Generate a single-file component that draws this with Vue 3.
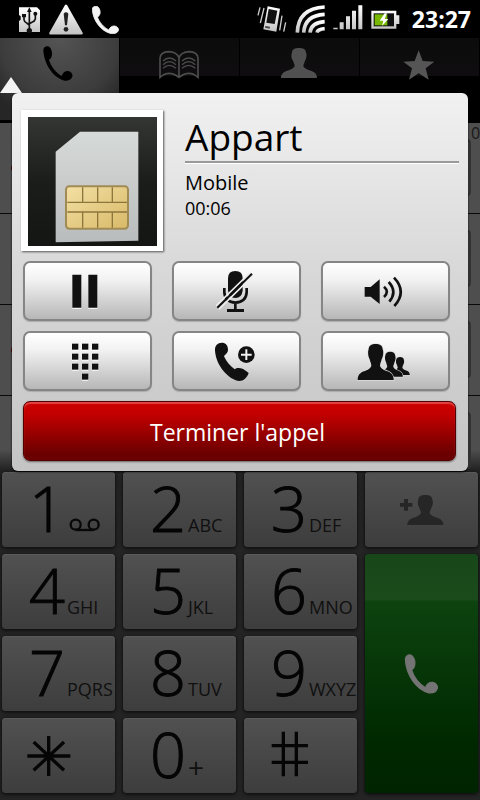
<script setup>
const handset =
  'M132 150 C132 140 140 136 147 138 C154 141 159 152 158 163 C157 172 153 176 149 178 C155 198 170 217 187 227 C190 217 198 211 207 212 C216 214 221 222 219 229 C216 238 206 242 196 241 C160 232 134 190 132 150Z'
const person =
  'M33 14 C33 4 42 0 54 0 C66 0 75 4 75 14 C78 18 77 32 72 38 C70 46 67 48 67 55 C72 64 82 66 92 69 C104 74 108 81 108 90 H0 C0 81 4 74 16 69 C26 66 36 64 41 55 C41 48 38 46 36 38 C31 32 30 18 33 14Z'
const keys = [
  { digit: '1', icon: 'voicemail' },
  { digit: '2', letters: 'ABC' },
  { digit: '3', letters: 'DEF' },
  { icon: 'add' },
  { digit: '4', letters: 'GHI' },
  { digit: '5', letters: 'JKL' },
  { digit: '6', letters: 'MNO' },
  { icon: 'call' },
  { digit: '7', letters: 'PQRS' },
  { digit: '8', letters: 'TUV' },
  { digit: '9', letters: 'WXYZ' },
  { icon: 'star' },
  { digit: '0', letters: '+' },
  { icon: 'hash' }
]
const labels = { add: 'Ajouter un contact', call: 'Appeler', star: 'Étoile', hash: 'Dièse' }
const rows = [
  { missed: true, count: '0' },
  { missed: false },
  { missed: true },
  { missed: false }
]
const dots = [
  [0, 0], [30, 0], [60, 0], [0, 30], [30, 30], [60, 30],
  [0, 60], [30, 60], [60, 60], [30, 90]
]
</script>

<template>
  <div class="phone">
    <header class="status">
      <svg width="22" height="27" viewBox="57 21 66 81">
        <defs>
          <linearGradient id="metal" x1="0" y1="0" x2="0" y2="1">
            <stop offset="0" stop-color="#fff" /><stop offset="1" stop-color="#c4c4c4" />
          </linearGradient>
        </defs>
        <path d="M57 25 H111 L120 34 V99 H57 V66 L62 62 V52 L57 48Z" fill="url(#metal)" />
        <g fill="none" stroke="#111" stroke-width="5">
          <path d="M88 34 V94 M72 50 V62 Q73 70 80 72 L88 78 M106 44 V60 Q104 67 97 69 L88 74" />
        </g>
        <path d="M88 25 L95 39 H81Z M66 45 H78 V55 H66Z" fill="#111" />
        <circle cx="106" cy="44" r="6" fill="#111" /><circle cx="88" cy="95" r="8" fill="#111" />
      </svg>
      <svg class="warn" width="36" height="32" viewBox="144 10 108 96">
        <path d="M198 18 L245 101 H151Z" fill="url(#metal)" stroke="url(#metal)" stroke-width="7" stroke-linejoin="round" />
        <path d="M191 42 Q198 34 205 42 L201 77 H195Z" fill="#222" />
        <circle cx="198" cy="89" r="7" fill="#222" />
      </svg>
      <svg class="ongoing" width="27" height="28" viewBox="131 137 90 105" preserveAspectRatio="none">
        <path :d="handset" fill="#f4f4f4" stroke="#f4f4f4" stroke-width="3" />
      </svg>
      <span class="grow"></span>
      <svg width="30" height="28" viewBox="52 15 90 84">
        <g fill="none" stroke="#ccc" stroke-width="4">
          <path d="M61 22 L55 46 M73 24 L62 69 M127 47 L120 91 M138 67 L132 95" />
        </g>
        <path d="M84 19 L121 26 L110 95 L71 88Z" fill="url(#metal)" />
        <path d="M87 27 L113 32 L105 72 L80 68Z" fill="#111" />
        <path d="M77 78 L91 80 L90 86 L76 83Z" fill="#444" />
      </svg>
      <svg class="wifi" width="30" height="28" viewBox="167 14 90 84">
        <g fill="none" stroke="url(#metal)" stroke-width="11">
          <path d="M174 97 Q176 24 256 20" />
          <path d="M193 97 Q196 45 256 42" />
          <path d="M212 97 Q215 67 256 64" />
          <path d="M233 97 Q235 87 256 85" />
        </g>
      </svg>
      <svg class="signal" width="30" height="25" viewBox="281 14 90 75">
        <path d="M282 82 H295 V87 H282Z M301 66 H313 V87 H301Z M320 48 H332 V87 H320Z M338 31 H350 V87 H338Z M357 15 H369 V87 H357Z" fill="url(#metal)" />
      </svg>
      <svg class="battery" width="29" height="19" viewBox="395 28 87 57">
        <path d="M396 30 H471 V44 H480 V70 H471 V84 H396Z" fill="url(#metal)" />
        <path d="M403 38 H464 V77 H403Z" fill="#111" />
        <path d="M406 41 H444 V74 H406Z" fill="#76b900" />
        <path d="M436 38 L421 60 H432 L428 76 L447 55 H436 L443 38Z" fill="#fff" />
      </svg>
      <time class="clock">23:27</time>
    </header>

    <nav class="tabs">
      <button class="tab active" aria-label="Téléphone">
        <svg width="30" height="35" viewBox="131 137 90 105"><path :d="handset" fill="#000" /></svg>
      </button>
      <button class="tab" aria-label="Répertoire">
        <svg class="book" width="42" height="29" viewBox="474 150 126 87">
          <g fill="none" stroke="#4c4c4c" stroke-width="5">
            <path d="M480 232 V174 Q482 156 506 155 Q531 156 537 174 Q543 156 568 155 Q592 156 594 174 V232 Q568 208 537 232 Q506 208 480 232Z M537 174 V232" />
            <path d="M489 183 Q508 165 528 183 M489 194 Q508 176 528 194 M489 205 Q508 187 528 205 M546 183 Q566 165 586 183 M546 194 Q566 176 586 194 M546 205 Q566 187 586 205" stroke-width="4" />
          </g>
        </svg>
      </button>
      <button class="tab" aria-label="Contacts">
        <svg width="36" height="30" viewBox="0 0 108 90"><path :d="person" fill="#505050" /></svg>
      </button>
      <button class="tab" aria-label="Favoris">
        <svg class="fav" width="32" height="30" viewBox="491 148 96 90">
          <path d="M538 149 L550 181 L585 183 L559 203 L568 237 L538 218 L509 237 L518 203 L492 183 L526 181Z" fill="#555" />
        </svg>
      </button>
    </nav>

    <main class="log">
      <div v-for="(row, i) in rows" :key="i" class="row">
        <i v-if="row.missed" class="missed"></i>
        <button class="detail" aria-label="Détails"></button>
        <span class="count">{{ row.count }}</span>
      </div>
    </main>

    <section class="dialer">
      <button
        v-for="(key, i) in keys"
        :key="i"
        class="key"
        :class="key.digit ? 'digitkey' : key.icon"
        :aria-label="labels[key.icon]"
      >
        <span v-if="key.digit" class="digit">{{ key.digit }}</span>
        <span v-if="key.letters" class="letters" :class="{ plus: key.letters === '+' }">{{ key.letters }}</span>
        <svg v-if="key.icon === 'voicemail'" width="32" height="14" viewBox="207 182 96 42">
          <g fill="none" stroke="#080808" stroke-width="7">
            <circle cx="227" cy="202" r="15" /><circle cx="281" cy="202" r="15" /><path d="M227 218 H281" />
          </g>
        </svg>
        <svg v-if="key.icon === 'add'" width="44" height="30" viewBox="-22 0 132 90">
          <path :d="person" fill="#262626" />
          <path d="M-10 12 H2 V24 H15 V35 H2 V47 H-10 V35 H-22 V24 H-10Z" fill="#262626" />
        </svg>
        <svg v-if="key.icon === 'call'" width="35" height="40" viewBox="129 135 94 109">
          <path :d="handset" fill="#747474" stroke="#747474" stroke-width="3" />
        </svg>
        <svg v-if="key.icon === 'star'" width="44" height="42" viewBox="80 318 132 126">
          <path d="M145 321 V441 M81 381 H210 M100 339 L191 424 M191 339 L100 424" stroke="#050505" stroke-width="10" />
        </svg>
        <svg v-if="key.icon === 'hash'" width="38" height="46" viewBox="95 301 114 138">
          <path d="M132 303 V437 M171 303 V437 M97 345 H206 M97 395 H206" stroke="#050505" stroke-width="10" />
        </svg>
      </button>
    </section>

    <span class="pointer"></span>
    <section class="popup" role="dialog" aria-label="Appel en cours">
      <div class="caller">
        <div class="photo">
          <svg viewBox="84 81 387 387">
            <defs>
              <linearGradient id="dark" x1="0" y1="0" x2="0" y2="1">
                <stop offset="0" stop-color="#343634" /><stop offset=".5" stop-color="#1b1d1b" /><stop offset="1" stop-color="#141614" />
              </linearGradient>
              <linearGradient id="card" x1="0" y1="0" x2="0" y2="1">
                <stop offset="0" stop-color="#d6dad8" /><stop offset=".5" stop-color="#c8cbca" /><stop offset="1" stop-color="#b9bcbc" />
              </linearGradient>
              <linearGradient id="gold" x1="0" y1="0" x2="1" y2="1">
                <stop offset="0" stop-color="#f3e0a4" /><stop offset="1" stop-color="#d8b968" />
              </linearGradient>
            </defs>
            <path d="M84 81 H471 V468 H84Z" fill="url(#dark)" />
            <path d="M240 125 H415 V452 L167 457 V185Z" fill="url(#card)" />
            <rect x="198" y="289" width="186" height="127" rx="10" fill="url(#gold)" stroke="#a18b55" stroke-width="6" />
            <path d="M202 337 H381 M202 366 H381 M248 292 V337 M293 292 V337 M337 292 V337 M248 366 V413 M293 366 V413 M337 366 V413" stroke="#8d763c" stroke-width="4" />
          </svg>
        </div>
        <div class="info">
          <h1>Appart</h1>
          <p class="kind">Mobile</p>
          <p class="timer">00:06</p>
        </div>
      </div>

      <div class="controls">
        <button aria-label="Attente">
          <svg width="27" height="36" viewBox="218 58 81 108">
            <path d="M219 63 H246 V162 H219Z M267 63 H294 V162 H267Z" fill="#fff" /><path d="M219 60 H246 V159 H219Z M267 60 H294 V159 H267Z" fill="#111" />
          </svg>
        </button>
        <button aria-label="Muet">
          <svg width="38" height="44" viewBox="648 42 114 132">
            <path d="M684 67 Q684 45 706 45 Q728 45 728 67 V103 Q726 126 706 126 Q686 126 684 103Z" fill="#111" />
            <path d="M673 96 V109 Q675 138 706 140 Q738 138 740 109 V96 M706 140 V163" fill="none" stroke="#111" stroke-width="8" />
            <path d="M681 159 H732 V168 H681Z" fill="#111" />
            <path d="M648 150 L752 48 M656 160 L760 58" stroke="#eee" stroke-width="5" />
            <path d="M652 155 L756 53" stroke="#111" stroke-width="6" />
          </svg>
        </button>
        <button aria-label="Haut-parleur">
          <svg width="39" height="32" viewBox="373 67 117 96">
            <path d="M375 100 H393 L420 77 V151 L393 129 H375Z" fill="#111" />
            <path d="M433 99 Q450 114 433 130 M447 85 Q474 114 449 144 M463 72 Q503 114 464 157" fill="none" stroke="#111" stroke-width="8" />
          </svg>
        </button>
        <button aria-label="Clavier">
          <svg width="27" height="38" viewBox="0 -2 81 114">
            <rect v-for="(d, i) in dots" :key="'s' + i" :x="d[0]" :y="d[1] + 3" width="19" height="18" fill="#fff" />
            <rect v-for="(d, i) in dots" :key="i" :x="d[0]" :y="d[1]" width="19" height="18" fill="#111" />
          </svg>
        </button>
        <button aria-label="Ajouter un appel">
          <svg width="42" height="40" viewBox="646 259 126 120">
            <path d="M649 285 C648 268 658 260 672 261 C682 262 688 270 688 282 C688 292 680 295 676 302 C683 318 694 331 708 341 C716 335 730 334 750 352 C745 366 735 376 722 376 C690 372 652 330 649 285Z" fill="#111" />
            <circle cx="743" cy="297" r="25" fill="#111" />
            <path d="M743 281 V313 M727 297 H759" stroke="#f2f2f2" stroke-width="6" />
          </svg>
        </button>
        <button aria-label="Conférence">
          <svg width="54" height="38" viewBox="352 264 162 114">
            <g fill="#111" stroke="#ddd" stroke-width="4" paint-order="stroke">
              <path transform="translate(452 306) scale(.54 .6)" :d="person" />
              <path transform="translate(414 290) scale(.7 .84)" :d="person" />
              <path transform="translate(354 267) scale(1 1.2)" :d="person" />
            </g>
          </svg>
        </button>
      </div>
      <button class="hangup">Terminer l'appel</button>
    </section>
  </div>
</template>

<style>
body {
  margin: 0;
  background: #000;
}
</style>

<style scoped>
.phone {
  position: relative;
  display: flex;
  flex-direction: column;
  min-height: 100vh;
  overflow: hidden;
  background: #000;
  font-family: "Open Sans", "Noto Sans", sans-serif;
}
svg {
  display: block;
  flex: none;
}
button {
  box-sizing: border-box;
  margin: 0;
  padding: 0;
  border: 0;
  font-family: inherit;
}
.status {
  display: flex;
  align-items: center;
  height: 38px;
  padding: 0 9px 0 19px;
}
.warn {
  margin-left: 7px;
}
.ongoing {
  margin-left: 8px;
  padding-top: 2px;
}
.grow {
  flex: 1;
}
.wifi {
  margin-left: 8px;
}
.signal {
  margin: 0 8px;
  padding-bottom: 4px;
}
.clock {
  margin-left: 12px;
  color: #fff;
  font-size: 23px;
  font-weight: 700;
  line-height: 38px;
}
.tabs {
  display: grid;
  grid-template-columns: repeat(4, 1fr);
  height: 82px;
  padding-bottom: 3px;
}
.tab {
  display: flex;
  justify-content: center;
  align-items: flex-start;
  padding: 10px 2px 0 0;
  border-right: 1px solid #000;
  background: linear-gradient(#0c0c0c, #0f0d0f 38px, #000 38px);
}
.tab.active {
  padding: 8px 4px 0 0;
  background: radial-gradient(circle at 50% 0, #545454, #3c3c3c 60px, #262626 85px);
}
.book,
.fav {
  margin-top: 2px;
}
.log {
  flex: 1;
  display: flex;
  flex-direction: column;
  background: linear-gradient(#4e4e4e 0, #4e4e4e calc(100% - 20px), #222);
}
.row {
  display: flex;
  align-items: flex-start;
  box-sizing: border-box;
  height: 91px;
  padding-left: 11px;
  border-bottom: 1px solid #090909;
}
.row:last-child {
  height: 74px;
  border-bottom: 0;
}
.missed {
  align-self: center;
  width: 10px;
  height: 10px;
  border-radius: 50%;
  background: #510000;
}
.detail {
  width: 60px;
  height: 57px;
  margin: 16px 0 0 auto;
  border: 2px solid #333;
  border-radius: 4px;
  background: #444;
}
.count {
  width: 9px;
  overflow: hidden;
  color: #191919;
  font-size: 16px;
  line-height: 20px;
}
.dialer {
  display: grid;
  grid-template-columns: repeat(4, 1fr);
  grid-auto-rows: 75px;
  gap: 7px 8px;
  padding: 2px 2px 7px;
  background: #242424;
}
.key {
  display: flex;
  justify-content: center;
  align-items: center;
  min-width: 0;
  border-radius: 4px;
  background: linear-gradient(#515151, #3d3d3d);
  box-shadow: 0 1px 3px 1px #111, inset 0 1px 0 #5a5a5a;
  color: #050505;
}
.digitkey {
  justify-content: flex-start;
  align-items: baseline;
  padding-left: 27px;
}
.digit {
  width: 36px;
  font-size: 63px;
  font-weight: 300;
  line-height: 72px;
  text-align: center;
  -webkit-text-stroke: 1px #050505;
}
.letters {
  margin-left: 2px;
  color: #101010;
  font-size: 18px;
}
.plus {
  font-size: 28px;
  line-height: 28px;
}
.digitkey svg {
  margin-left: 4px;
}
.call {
  grid-row: 2 / 5;
  grid-column: 4;
  background: linear-gradient(#18481a, #1b4a1b 46px, #0d430f 47px, #002800 190px, #002400);
  box-shadow: 0 1px 3px 1px #111;
}
.star,
.hash {
  justify-content: flex-start;
  padding-left: 25px;
}
.hash {
  padding: 0 0 4px 27px;
}
.pointer {
  position: absolute;
  top: 77px;
  left: 0;
  width: 22px;
  height: 16px;
  background: #f4f4f4;
  clip-path: polygon(50% 0, 100% 100%, 0 100%);
}
.popup {
  position: absolute;
  top: 93px;
  left: 12px;
  right: 12px;
  padding: 17px 12px 10px 11px;
  box-sizing: border-box;
  border-radius: 6px;
  background: linear-gradient(#f1f1f1, #e9e9e9 60px, #d9d9d9 170px, #c4c4c4);
  box-shadow: 0 1px 2px #000;
}
.caller {
  display: flex;
}
.photo {
  box-sizing: border-box;
  flex: none;
  width: 142px;
  height: 141px;
  margin-left: -2px;
  padding: 7px 6px 5px 7px;
  background: #fff;
  box-shadow: 1px 1px 2px #555;
}
.info {
  flex: 1;
  margin: 0 -3px 0 22px;
  color: #000;
}
h1 {
  margin: 0;
  padding-top: 2px;
  border-bottom: 2px solid #999;
  box-shadow: 0 1px 0 #fff;
  font-size: 37px;
  font-weight: 400;
  line-height: 49px;
}
p {
  margin: 0;
}
.kind {
  padding-top: 6px;
  font-size: 20px;
  line-height: 27px;
}
.timer {
  font-size: 18px;
  line-height: 24px;
}
.controls {
  display: grid;
  grid-template-columns: repeat(3, 1fr);
  gap: 10px 20px;
  padding: 10px 6px 10px 0;
}
.controls button {
  display: flex;
  justify-content: center;
  align-items: center;
  height: 60px;
  padding: 2px 4px 0 0;
  border: 2px solid #858585;
  border-radius: 7px;
  background: linear-gradient(#fff, #f2f2f2 30%, #b7b7b7);
  box-shadow: 0 1px 1px #aaa;
}
.hangup {
  display: block;
  width: 100%;
  height: 60px;
  padding: 2px 4px 0 0;
  border: 1px solid #500;
  border-radius: 7px;
  background: linear-gradient(#cc0000, #c40000 20%, #6a0000 90%);
  box-shadow: inset 0 2px 1px #e04444, 0 1px 2px #666;
  color: #fff;
  font-size: 23px;
}
</style>
